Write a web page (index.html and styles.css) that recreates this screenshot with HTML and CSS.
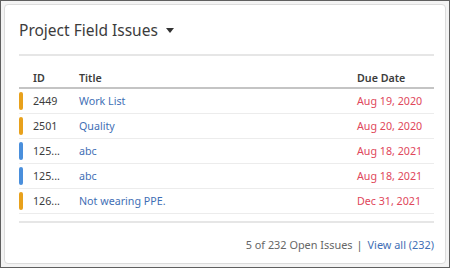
FILE: index.html
```html
<!DOCTYPE html>
<html>
<head>
<meta charset="utf-8">
<link rel="stylesheet" href="styles.css">
</head>
<body>
<div class="frame">
  <div class="card">
    <div class="card-head">
      <span class="card-title">Project Field Issues</span>
      <span class="caret"></span>
    </div>
    <table class="issues">
      <thead>
        <tr><th class="c-bar"></th><th class="c-id">ID</th><th class="c-title">Title</th><th class="c-date">Due Date</th></tr>
      </thead>
      <tbody>
        <tr><td class="c-bar"><span class="bar orange"></span></td><td class="c-id">2449</td><td class="c-title"><a>Work List</a></td><td class="c-date">Aug 19, 2020</td></tr>
        <tr><td class="c-bar"><span class="bar orange"></span></td><td class="c-id">2501</td><td class="c-title"><a>Quality</a></td><td class="c-date">Aug 20, 2020</td></tr>
        <tr><td class="c-bar"><span class="bar blue"></span></td><td class="c-id">125...</td><td class="c-title"><a>abc</a></td><td class="c-date">Aug 18, 2021</td></tr>
        <tr><td class="c-bar"><span class="bar blue"></span></td><td class="c-id">125...</td><td class="c-title"><a>abc</a></td><td class="c-date">Aug 18, 2021</td></tr>
        <tr><td class="c-bar"><span class="bar orange"></span></td><td class="c-id">126...</td><td class="c-title"><a>Not wearing PPE.</a></td><td class="c-date">Dec 31, 2021</td></tr>
      </tbody>
    </table>
    <div class="card-foot">
      <span class="count">5 of 232 Open Issues</span>
      <span class="sep">|</span>
      <a class="view-all">View all (232)</a>
    </div>
  </div>
</div>
</body>
</html>
```
FILE: styles.css
```css
html, body {
  margin: 0;
  padding: 0;
}
body {
  width: 450px;
  height: 268px;
  font-family: "Noto Sans", "Open Sans", sans-serif;
  color: #3c3c3c;
}
.frame {
  box-sizing: border-box;
  width: 450px;
  height: 268px;
  border: 1px solid #5f5f5f;
  background: #f3f3f3;
  padding: 3px;
}
.card {
  box-sizing: border-box;
  height: 100%;
  background: #fff;
  border: 1px solid #dcdcdc;
  border-radius: 4px;
  padding: 0 11px 0 14px;
}
.card-head {
  display: flex;
  align-items: center;
  height: 51px;
  border-bottom: 2px solid #e6e6e6;
  box-sizing: border-box;
}
.card-title {
  font-size: 15.5px;
  color: #3c3c3c;
}
.caret {
  width: 0;
  height: 0;
  border-left: 4.5px solid transparent;
  border-right: 4.5px solid transparent;
  border-top: 5px solid #333;
  margin-left: 8px;
  margin-top: 1px;
}
.issues {
  width: 100%;
  border-collapse: collapse;
  margin-top: 14px;
  font-size: 10.7px;
}
.issues th {
  font-weight: 600;
  text-align: left;
  color: #3c3c3c;
  height: 17px;
  line-height: 17px;
  padding: 0;
  border-bottom: 2px solid #c4c4c4;
  vertical-align: top;
}
.issues td {
  padding: 0;
  height: 24px;
  border-bottom: 1px solid #ececec;
  vertical-align: middle;
}
.c-bar { width: 14px; }
.c-id { width: 46px; color: #3c3c3c; }
.c-title a { color: #3f6fb5; }
.c-date { width: 77px; color: #e0475b; }
th.c-date { color: #3c3c3c; }
.bar {
  display: block;
  width: 4px;
  height: 18px;
  border-radius: 2px;
}
.bar.orange { background: #e8a11c; }
.bar.blue { background: #4a8fdc; }
.card-foot {
  border-top: 2px solid #e6e6e6;
  margin-top: 7px;
  display: flex;
  justify-content: flex-end;
  align-items: center;
  height: 42px;
  font-size: 10.9px;
  color: #666;
}
.sep { margin: 0 5px 0 4px; color: #555; }
.view-all { color: #3f6fb5; }
```
